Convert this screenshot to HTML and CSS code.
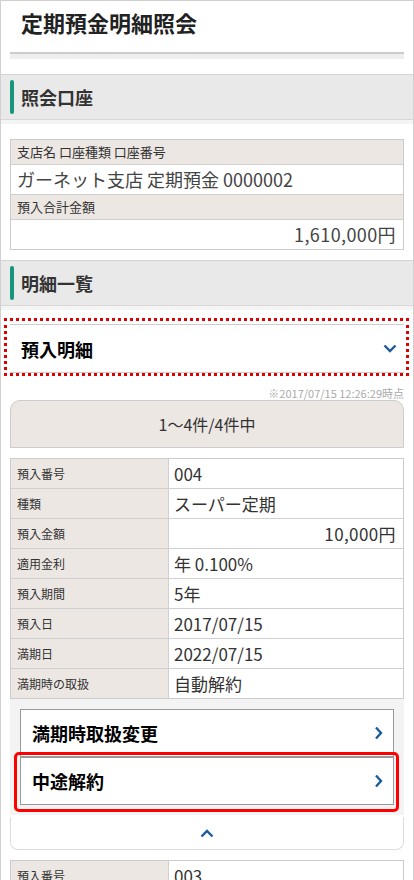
FILE: index.html
```html
<!DOCTYPE html>
<html lang="ja">
<head>
    <meta charset="UTF-8">
    <meta name="viewport" content="width=device-width, initial-scale=1.0">
    <title>定期預金明細照会</title>
    <link rel="stylesheet" href="styles.css">
</head>
<body>
<div class="page">
    <h1 class="page-title">定期預金明細照会</h1>
    <div class="title-rule"></div>

    <h2 class="section-head">照会口座</h2>
    <div class="account">
        <div class="account-label">支店名 口座種類 口座番号</div>
        <div class="account-value">ガーネット支店 定期預金 0000002</div>
        <div class="account-label">預入合計金額</div>
        <div class="account-value num">1,610,000円</div>
    </div>

    <h2 class="section-head section-head-list">明細一覧</h2>
    <div class="accordion mark-dotted">
        <span>預入明細</span>
        <svg width="14" height="9" viewBox="0 0 14 9">
            <path d="M1.5 1.5 L7 7 L12.5 1.5" fill="none" stroke="#1b5b9a" stroke-width="2.4"/>
        </svg>
    </div>
    <p class="stamp">※2017/07/15 12:26:29時点</p>

    <div class="pager">1〜4件/4件中</div>

    <div class="detail">
        <div class="row"><div class="cell-label">預入番号</div><div class="cell-value">004</div></div>
        <div class="row"><div class="cell-label">種類</div><div class="cell-value">スーパー定期</div></div>
        <div class="row"><div class="cell-label">預入金額</div><div class="cell-value num">10,000円</div></div>
        <div class="row"><div class="cell-label">適用金利</div><div class="cell-value">年 0.100%</div></div>
        <div class="row"><div class="cell-label">預入期間</div><div class="cell-value">5年</div></div>
        <div class="row"><div class="cell-label">預入日</div><div class="cell-value">2017/07/15</div></div>
        <div class="row"><div class="cell-label">満期日</div><div class="cell-value">2022/07/15</div></div>
        <div class="row"><div class="cell-label">満期時の取扱</div><div class="cell-value">自動解約</div></div>
    </div>

    <div class="actions">
        <a class="action" href="#">
            <span>満期時取扱変更</span>
            <svg width="9" height="14" viewBox="0 0 9 14">
                <path d="M2 1.5 L7 7 L2 12.5" fill="none" stroke="#1b5b9a" stroke-width="2.4"/>
            </svg>
        </a>
        <a class="action mark-solid" href="#">
            <span>中途解約</span>
            <svg width="9" height="14" viewBox="0 0 9 14">
                <path d="M2 1.5 L7 7 L2 12.5" fill="none" stroke="#1b5b9a" stroke-width="2.4"/>
            </svg>
        </a>
    </div>
    <div class="collapse">
        <svg width="14" height="9" viewBox="0 0 14 9">
            <path d="M1.5 7.5 L7 2 L12.5 7.5" fill="none" stroke="#1b5b9a" stroke-width="2.4"/>
        </svg>
    </div>

    <div class="detail">
        <div class="row"><div class="cell-label">預入番号</div><div class="cell-value">003</div></div>
        <div class="row"><div class="cell-label">種類</div><div class="cell-value">スーパー定期</div></div>
    </div>
</div>
</body>
</html>
```

FILE: styles.css
```css
body {
    margin: 0;
    font-family: "Noto Sans CJK JP", "Noto Sans", sans-serif;
    color: #333;
    background-color: #fff;
}
.page {
    border: 1px solid #d0d0d0;
    min-height: 878px;
}
.page-title {
    margin: 0 0 16px;
    padding: 7px 20px 0;
    font-size: 22px;
    line-height: 28px;
    font-weight: bold;
    color: #222;
}
.title-rule {
    margin: 0 9px 15px;
    border-top: 2px solid #ccc;
    height: 5px;
    background-color: #eee;
}
.section-head {
    display: flex;
    align-items: center;
    margin: 0 0 19px;
    padding: 0 9px;
    height: 44px;
    border-top: 1px solid #d4d4d4;
    border-bottom: 1px solid #d8d8d8;
    box-shadow: 0 4px 0 #f4f4f4;
    background-color: #e9e9e9;
    font-size: 18px;
    font-weight: bold;
    color: #333;
}
.section-head::before {
    content: "";
    width: 4px;
    height: 34px;
    margin-right: 7px;
    border-radius: 2px;
    background-color: #16967c;
}
.section-head-list {
    margin-top: 10px;
    margin-bottom: 18px;
}

/* account box */
.account {
    margin: 0 9px;
    border: 1px solid #ccc;
}
.account-label {
    height: 24px;
    line-height: 24px;
    padding: 0 6px;
    font-size: 13px;
    background-color: #ece7e3;
    border-bottom: 1px solid #d0d0d0;
}
.account-value {
    height: 29px;
    line-height: 29px;
    padding: 0 7px 0 6px;
    font-size: 18px;
    color: #444;
    border-bottom: 1px solid #d0d0d0;
}
.account-value:last-child {
    border-bottom: none;
}
.num {
    text-align: right;
    letter-spacing: 0.4px;
}

/* accordion */
.accordion {
    position: relative;
    display: flex;
    justify-content: space-between;
    align-items: center;
    margin: 0 9px;
    height: 47px;
    padding: 0 7px 0 11px;
    border-top: 1px solid #ccc;
    border-bottom: 1px solid #ccc;
    font-size: 18px;
    font-weight: bold;
    color: #000;
}
.mark-dotted::after {
    content: "";
    position: absolute;
    top: -7px;
    left: -6px;
    right: -5px;
    bottom: -4px;
    border: 3px dotted #e00000;
    pointer-events: none;
}
.stamp {
    margin: 13px 9px 0;
    font-size: 11px;
    line-height: 14px;
    color: #aaa;
    text-align: right;
}
.pager {
    margin: 0 9px;
    height: 46px;
    line-height: 46px;
    border: 1px solid #ccc;
    border-radius: 10px 10px 0 0;
    background-color: #ece7e3;
    text-align: center;
    font-size: 16px;
    color: #333;
}

/* detail table */
.detail {
    margin: 10px 9px 0;
    border: 1px solid #ccc;
}
.row {
    display: flex;
    height: 29px;
    border-bottom: 1px solid #d0d0d0;
}
.row:last-child {
    border-bottom: none;
}
.cell-label {
    width: 151px;
    flex: none;
    padding-left: 6px;
    line-height: 29px;
    font-size: 12px;
    color: #333;
    background-color: #ece7e3;
    border-right: 1px solid #d0d0d0;
}
.cell-value {
    flex: 1;
    padding: 0 7px 0 5px;
    line-height: 29px;
    font-size: 17px;
    color: #333;
}

/* action buttons */
.actions {
    margin: 0 9px;
    padding: 10px 10px;
    background-color: #f3f3f3;
}
.action {
    position: relative;
    display: flex;
    justify-content: space-between;
    align-items: center;
    height: 46px;
    padding: 0 10px 0 11px;
    border: 1px solid #999;
    background-color: #fff;
    font-size: 18px;
    font-weight: bold;
    color: #000;
    text-decoration: none;
}
.mark-solid::after {
    content: "";
    position: absolute;
    top: -6px;
    left: -7px;
    right: -6px;
    bottom: -8px;
    border: 3px solid #ff0000;
    border-radius: 5px;
    pointer-events: none;
}
.collapse {
    display: flex;
    justify-content: center;
    align-items: center;
    margin: 2px 9px 0;
    height: 32px;
    border: 1px solid #ddd;
    border-top: none;
    border-radius: 0 0 8px 8px;
}
```
